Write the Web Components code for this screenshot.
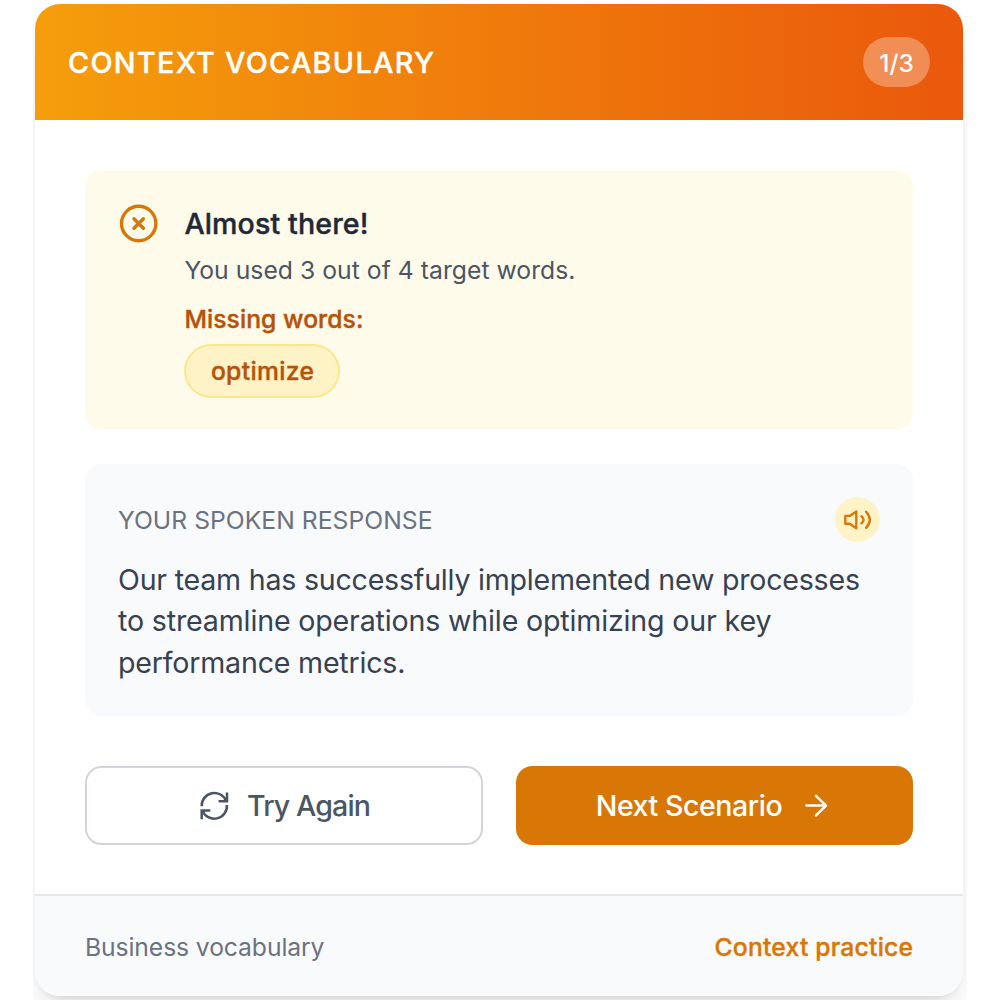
<!DOCTYPE html>
<html lang="en">
<head>
<meta charset="utf-8">
<title>Context Vocabulary</title>
<style>
html, body { margin: 0; height: 100%; background: #fff; overflow: hidden; }
body { font-family: Inter, "Liberation Sans", sans-serif; }
</style>
</head>
<body>
<vocab-stage>
  <vocab-card>
    <fit-text slot="title" width="366" size="28.8" weight="500" line="52" firm>CONTEXT VOCABULARY</fit-text>
    <fit-text slot="count" width="34.5" size="24.4" weight="500" line="52">1/3</fit-text>
    <result-panel>
      <fit-text slot="heading" width="184" size="28.6" weight="500" line="41" firm>Almost there!</fit-text>
      <fit-text slot="summary" width="391" size="24.7" weight="400" line="33">You used 3 out of 4 target words.</fit-text>
      <fit-text slot="label" width="179" size="24.7" weight="500" line="33" firm>Missing words:</fit-text>
      <word-chip><fit-text width="103" size="24.7" weight="500" line="50" firm>optimize</fit-text></word-chip>
    </result-panel>
    <response-panel>
      <fit-text slot="heading" width="314.5" size="24.7" weight="400" line="33">YOUR SPOKEN RESPONSE</fit-text>
      <fit-text width="742" size="28.6" weight="400" line="41.4">Our team has successfully implemented new processes</fit-text>
      <fit-text width="653.5" size="28.6" weight="400" line="41.4">to streamline operations while optimizing our key</fit-text>
      <fit-text width="287.5" size="28.6" weight="400" line="41.4">performance metrics.</fit-text>
    </response-panel>
    <action-row>
      <action-button kind="outline" icon="refresh"><fit-text width="124" size="28.6" weight="500" line="42">Try Again</fit-text></action-button>
      <action-button kind="solid" icon="arrow"><fit-text width="187" size="28.6" weight="500" line="42">Next Scenario</fit-text></action-button>
    </action-row>
    <fit-text slot="topic" width="239.5" size="24.7" weight="400" line="35">Business vocabulary</fit-text>
    <fit-text slot="mode" width="198.5" size="24.7" weight="500" line="35" firm>Context practice</fit-text>
  </vocab-card>
</vocab-stage>
<script>
class ShadowElement extends HTMLElement {
  constructor() {
    super();
    this.attachShadow({ mode: "open" }).innerHTML = this.constructor.markup;
  }
}

/* A single line of text tracked to an even measure; "firm" adds a touch of weight. */
class FitText extends ShadowElement {
  static markup = `<style>
    :host { display: block; white-space: nowrap; }
    :host([firm]) { -webkit-text-stroke: .4px currentColor; }
    span { display: inline-block; vertical-align: top; }
  </style><span><slot></slot></span>`;
  connectedCallback() {
    const span = this.shadowRoot.querySelector("span");
    const target = +this.getAttribute("width");
    this.style.width = target + "px";
    this.style.fontSize = this.getAttribute("size") + "px";
    this.style.fontWeight = this.getAttribute("weight");
    this.style.lineHeight = this.getAttribute("line") + "px";
    const natural = span.getBoundingClientRect().width;
    const gaps = this.textContent.length - 1;
    span.style.letterSpacing = (target - natural) / gaps + "px";
  }
}

class VocabStage extends ShadowElement {
  static markup = `<style>
    :host { display: block; box-sizing: border-box; width: 934px; height: 1000px; margin-left: 33px; padding: 4px 4px 0 2px; overflow: hidden; }
  </style><slot></slot>`;
}

class VocabCard extends ShadowElement {
  static markup = `<style>
    :host { display: flex; flex-direction: column; width: 928px; height: 992px; border-radius: 25px; overflow: hidden; background: #fff;
      box-shadow: 0 20px 31px -6px rgba(0,0,0,.1), 0 8px 12px -8px rgba(0,0,0,.1), 0 0 5px rgba(0,0,0,.035); }
    header { display: flex; align-items: center; justify-content: space-between; height: 116px; box-sizing: border-box; padding: 0 33px; flex: none;
      color: #fff; background: linear-gradient(to right, #f59e0b, #ea580c); }
    .title { padding-top: 2px; }
    .count { display: flex; justify-content: center; width: 67px; height: 50px; border-radius: 25px; background: rgba(255,255,255,.3); }
    main { display: flex; flex-direction: column; padding: 50px 50px 0; flex: 1; }
    footer { display: flex; justify-content: space-between; align-items: center; box-sizing: border-box; height: 102px; padding: 2px 50px 0; flex: none;
      border-top: 2px solid #e5e7eb; background: #f9fafb; }
    .topic { color: #6b7280; } .mode { color: #d97706; }
  </style>
  <header><div class="title"><slot name="title"></slot></div><div class="count"><slot name="count"></slot></div></header>
  <main><slot></slot></main>
  <footer><div class="topic"><slot name="topic"></slot></div><div class="mode"><slot name="mode"></slot></div></footer>`;
}

class ResultPanel extends ShadowElement {
  static markup = `<style>
    :host { display: flex; gap: 25.4px; box-sizing: border-box; height: 260px; padding: 33px 34px; border-radius: 16.5px; background: #fffbeb; }
    svg { flex: none; width: 40px; height: 40px; margin-top: 1px; }
    .copy { display: flex; flex-direction: column; align-items: flex-start; }
    .h { color: #1f2937; } .s { color: #4b5563; margin-top: 10px; } .l { color: #b45309; margin: 16px 0 8px; }
  </style>
  <svg viewBox="0 0 40 40" fill="none" stroke="#d97706" stroke-width="3.4" stroke-linecap="round"><circle cx="19.7" cy="19.5" r="17.2"/><path d="M15 14.8l9.4 9.4M24.4 14.8l-9.4 9.4"/></svg>
  <div class="copy"><div class="h"><slot name="heading"></slot></div><div class="s"><slot name="summary"></slot></div><div class="l"><slot name="label"></slot></div><slot></slot></div>`;
}

class WordChip extends ShadowElement {
  static markup = `<style>
    :host { display: flex; justify-content: center; box-sizing: border-box; width: 156px; height: 54px; border: 2px solid #fde68a; border-radius: 27px; background: #fef3c7; color: #b45309; }
  </style><slot></slot>`;
}

class ResponsePanel extends ShadowElement {
  static markup = `<style>
    :host { display: block; box-sizing: border-box; height: 252px; margin-top: 34px; padding: 33px 33px 0; border-radius: 16.5px; background: #f9fafb; color: #374151; }
    .top { display: flex; align-items: flex-start; justify-content: space-between; height: 46px; margin-bottom: 16px; color: #6b7280; }
    .title { padding-top: 6.5px; }
    .play { width: 45.4px; height: 45.4px; border-radius: 50%; background: #fef3c7; }
    svg { display: block; width: 45.4px; height: 45.4px; }
  </style>
  <div class="top"><div class="title"><slot name="heading"></slot></div><div class="play">
    <svg viewBox="0 0 45.4 45.4" fill="none" stroke="#d97706" stroke-width="2.4" stroke-linecap="round" stroke-linejoin="round"><path d="M10.3 18.9H14.7L21.3 14.4V31.2L14.7 26.7H10.3ZM26.5 19.3Q30.7 22.8 26.5 26.3M31.1 14.7Q38.5 22.8 31.1 30.9"/></svg>
  </div></div><slot></slot>`;
}

class ActionRow extends ShadowElement {
  static markup = `<style>:host { display: grid; grid-template-columns: 1fr 1fr; gap: 33px; height: 79px; margin-top: 50px; }</style><slot></slot>`;
}

class ActionButton extends ShadowElement {
  static markup = `<style>
    :host { display: flex; align-items: center; justify-content: center; box-sizing: border-box; border-radius: 16.5px; }
    :host([kind="outline"]) { gap: 16.5px; border: 2px solid #d1d5db; color: #4b5563; }
    :host([kind="solid"]) { gap: 16px; background: #d97706; color: #fff; }
    svg { display: none; flex: none; width: 34px; height: 34px; }
    :host([icon="refresh"]) .refresh, :host([icon="arrow"]) .arrow { display: block; }
  </style>
  <svg class="refresh" viewBox="0 0 34 34" fill="none" stroke="currentColor" stroke-width="2.5"><path d="M4.7 17.2A12.7 12.7 0 0 1 29.2 12M30 3.5V12.2H21.6M29.9 16A12.7 12.7 0 0 1 5.4 21.6M4.7 30.3V21.4H13.3"/></svg>
  <slot></slot>
  <svg class="arrow" viewBox="0 0 34 34" fill="none" stroke="currentColor" stroke-width="2.5" stroke-linecap="round" stroke-linejoin="round"><path d="M7.5 16.6H27M17 6.8L27 16.6L17 26.4"/></svg>`;
}

for (const [name, type] of Object.entries({
  "vocab-stage": VocabStage, "vocab-card": VocabCard, "result-panel": ResultPanel, "word-chip": WordChip,
  "response-panel": ResponsePanel, "action-row": ActionRow, "action-button": ActionButton, "fit-text": FitText
})) customElements.define(name, type);
</script>
</body>
</html>
